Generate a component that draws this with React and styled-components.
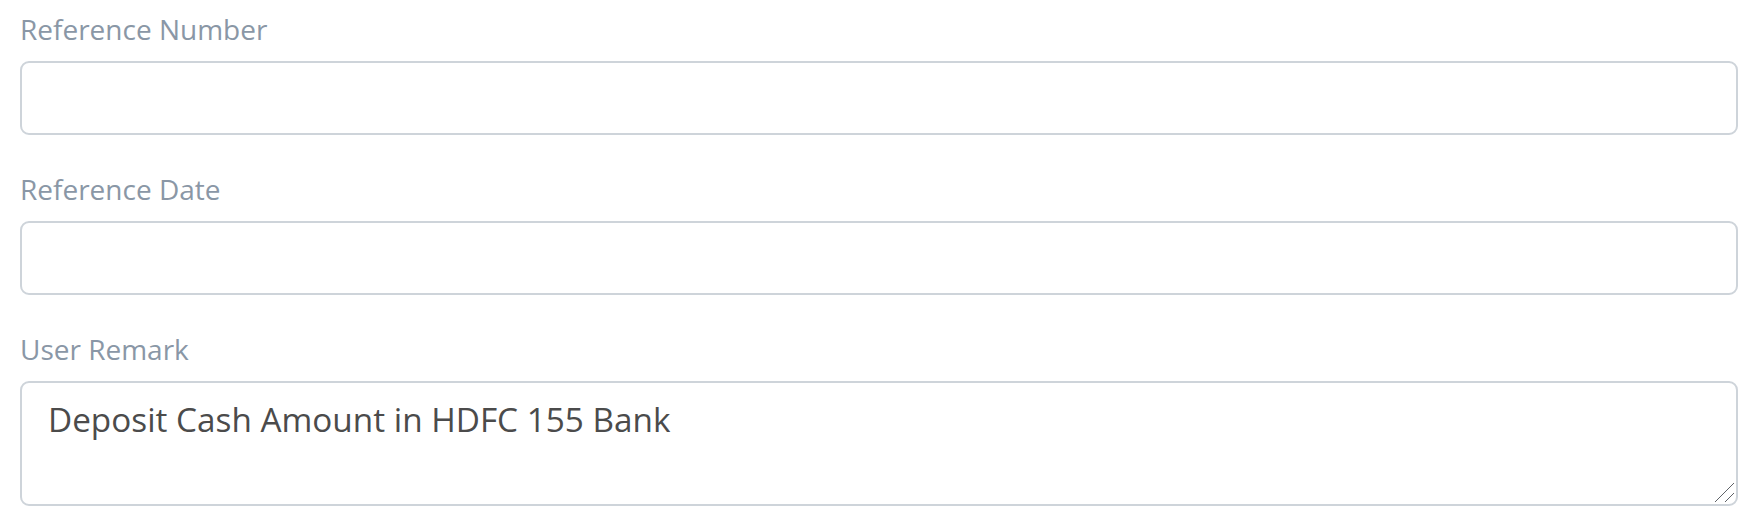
import React from "react";
import styled, { createGlobalStyle } from "styled-components";

const GlobalStyle = createGlobalStyle`
  html, body {
    margin: 0;
    padding: 0;
    background: #ffffff;
  }

  * {
    box-sizing: border-box;
  }
`;

const Form = styled.form`
  display: flex;
  flex-direction: column;
  gap: 32px;
  padding: 7px 21px 0 20px;
  font-family: "Open Sans", "Noto Sans", sans-serif;
`;

const Field = styled.div`
  display: flex;
  flex-direction: column;
`;

const Label = styled.label`
  font-size: 28px;
  line-height: 44px;
  color: #8a97a6;
  margin-bottom: 10px;
`;

const fieldBox = `
  width: 100%;
  border: 2px solid #ced4da;
  border-radius: 9px;
  background: #ffffff;
  color: #4b4b4b;
  font-family: "Open Sans", "Noto Sans", sans-serif;
  outline: none;
`;

const Input = styled.input`
  ${fieldBox}
  height: 74px;
  padding: 0 26px;
  font-size: 33px;
`;

const AreaWrap = styled.div`
  position: relative;
  display: flex;
`;

const TextArea = styled.textarea`
  ${fieldBox}
  height: 125px;
  padding: 12px 26px;
  font-size: 33.3px;
  line-height: 48px;
  resize: none;
`;

const Grip = styled.svg`
  position: absolute;
  right: 3px;
  bottom: 3px;
  width: 21px;
  height: 21px;
  pointer-events: none;
`;

const ResizeGrip = () => (
  <Grip viewBox="0 0 21 21">
    <line x1="1" y1="20" x2="20" y2="1" stroke="#5f6368" strokeWidth="1" />
    <line x1="11" y1="20" x2="20" y2="11" stroke="#5f6368" strokeWidth="1" />
  </Grip>
);

const App = () => {
  return (
    <>
      <GlobalStyle />
      <Form>
        <Field>
          <Label htmlFor="ref-number">Reference Number</Label>
          <Input id="ref-number" type="text" />
        </Field>
        <Field>
          <Label htmlFor="ref-date">Reference Date</Label>
          <Input id="ref-date" type="text" />
        </Field>
        <Field>
          <Label htmlFor="user-remark">User Remark</Label>
          <AreaWrap>
            <TextArea
              id="user-remark"
              defaultValue="Deposit Cash Amount in HDFC 155 Bank"
            />
            <ResizeGrip />
          </AreaWrap>
        </Field>
      </Form>
    </>
  );
};

export default App;
